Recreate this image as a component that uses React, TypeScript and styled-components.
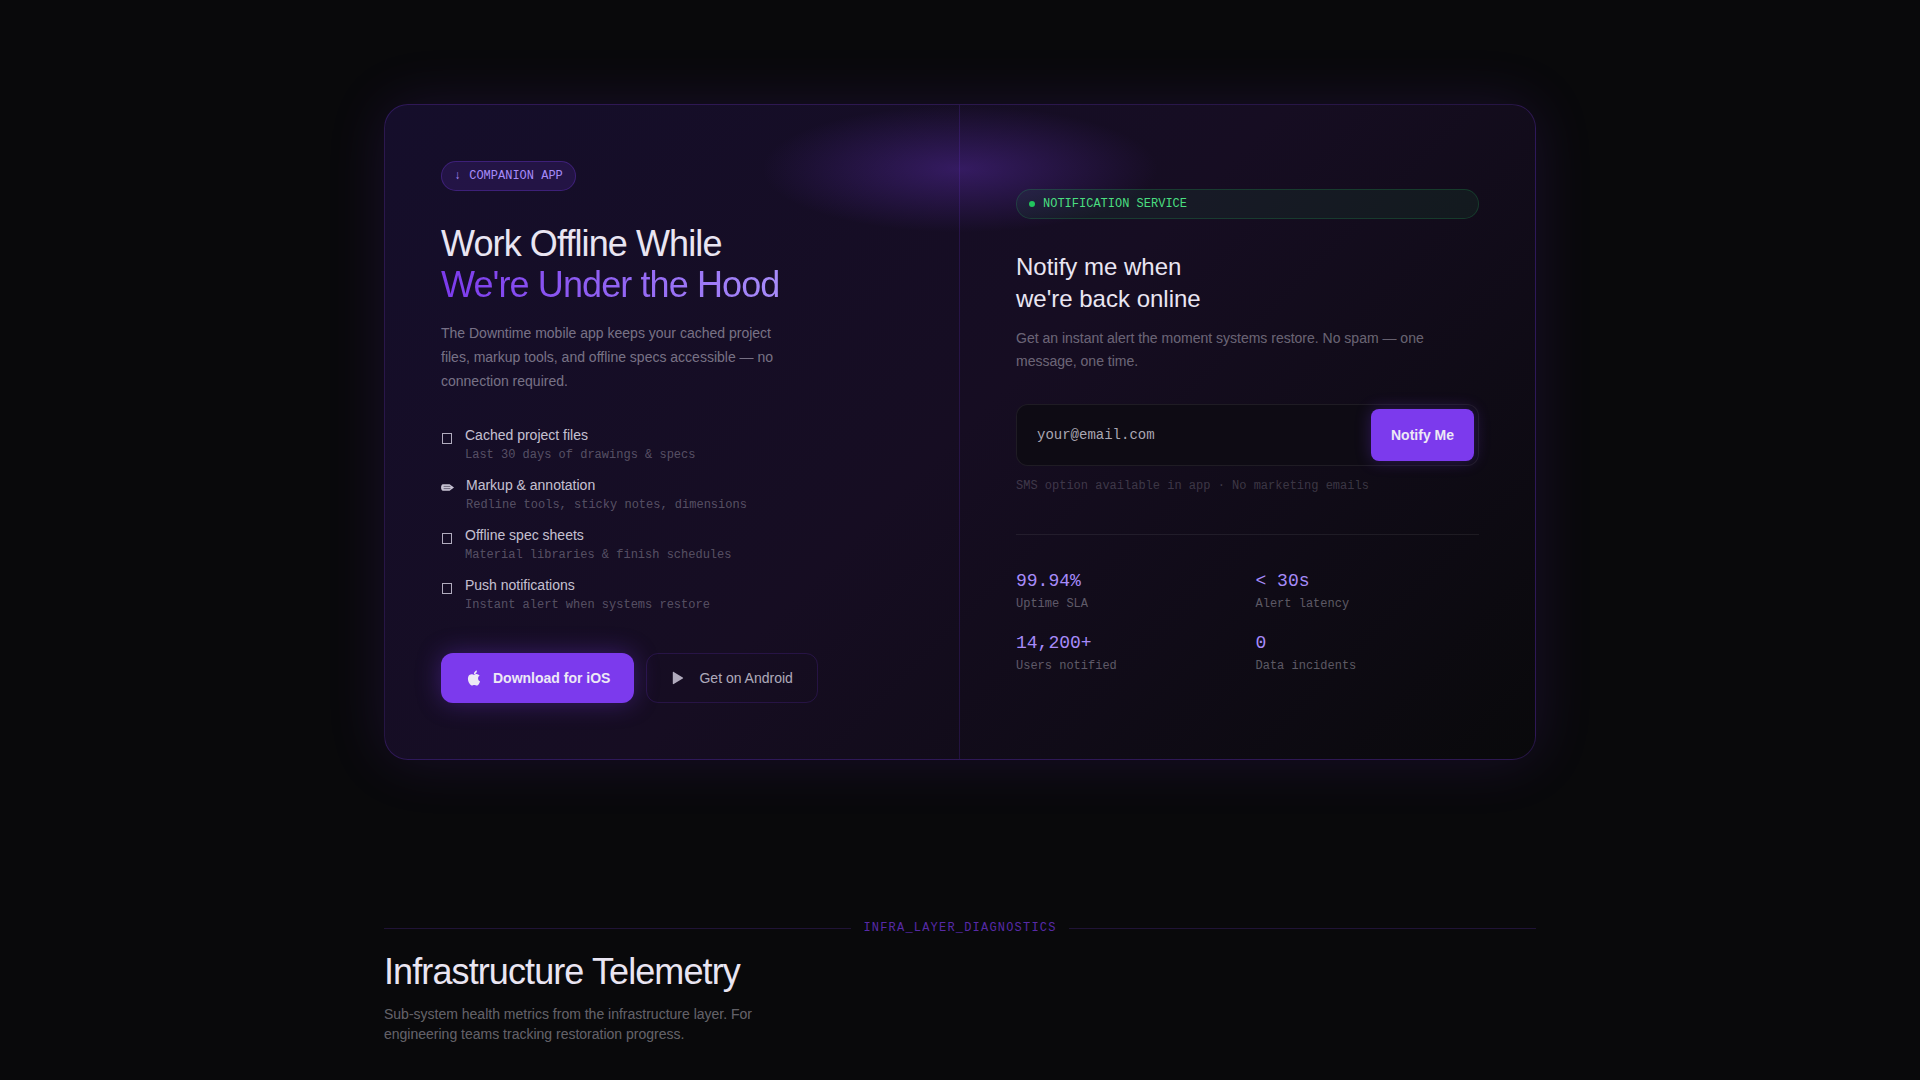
import React from "react";
import styled, { createGlobalStyle } from "styled-components";

const sans = `"Liberation Sans", Arial, sans-serif`;
const mono = `"Liberation Mono", "Courier New", monospace`;

const GlobalStyle = createGlobalStyle`
  *, *::before, *::after { box-sizing: border-box; }
  body {
    margin: 0;
    background: #09090b;
    color: #e9e5f2;
    font-family: ${sans};
    font-size: 14px;
    line-height: 20px;
  }
  h1, h2, h3, p, ul, dl, dd { margin: 0; padding: 0; font-weight: 400; }
  button, input { font: inherit; }
`;

const Page = styled.main`
  max-width: 1200px;
  margin: 0 auto;
  padding: 104px 24px 40px;
`;

const Card = styled.section`
  position: relative;
  display: grid;
  grid-template-columns: 1fr 1fr;
  overflow: hidden;
  border: 1px solid rgba(124, 58, 237, 0.25);
  border-radius: 24px;
  background: linear-gradient(135deg, #150e2b 0%, #160d22 50%, #09090b 100%);
  box-shadow: 0 0 60px rgba(124, 58, 237, 0.14);
`;

const Glow = styled.div`
  position: absolute;
  top: 0;
  left: 50%;
  width: 400px;
  height: 128px;
  transform: translateX(-50%);
  background: radial-gradient(ellipse, rgba(124, 58, 237, 0.3) 0%, transparent 70%);
  pointer-events: none;
`;

const AppPanel = styled.div`
  position: relative;
  padding: 56px;
  border-right: 1px solid rgba(124, 58, 237, 0.18);
`;

const NotifyPanel = styled.div`
  position: relative;
  display: flex;
  flex-direction: column;
  justify-content: center;
  padding: 56px;
`;

const Badge = styled.div<{ $tone: "violet" | "green" }>`
  display: ${(p) => (p.$tone === "violet" ? "inline-flex" : "flex")};
  align-items: center;
  gap: 8px;
  height: 30px;
  margin-bottom: 32px;
  padding: 0 12px;
  border: 1px solid
    ${(p) => (p.$tone === "violet" ? "rgba(124, 58, 237, 0.3)" : "rgba(34, 197, 94, 0.2)")};
  border-radius: 15px;
  background: ${(p) =>
    p.$tone === "violet" ? "rgba(124, 58, 237, 0.15)" : "rgba(34, 197, 94, 0.08)"};
  color: ${(p) => (p.$tone === "violet" ? "#a78bfa" : "#4ade80")};
  font-family: ${mono};
  font-size: 12px;
`;

const Dot = styled.span`
  width: 6px;
  height: 6px;
  border-radius: 50%;
  background: #22c55e;
`;

const Title = styled.h2`
  font-size: 36px;
  line-height: 41px;
  letter-spacing: -0.025em;
`;

const Accent = styled.span`
  background: linear-gradient(90deg, #7c3aed, #a78bfa);
  background-clip: text;
  -webkit-background-clip: text;
  color: transparent;
`;

const Lead = styled.p`
  max-width: 360px;
  margin-top: 16px;
  color: rgba(244, 240, 255, 0.45);
  line-height: 24px;
`;

const Features = styled.ul`
  display: flex;
  flex-direction: column;
  gap: 10px;
  margin-top: 32px;
  list-style: none;
`;

const Feature = styled.li`
  display: flex;
  align-items: flex-start;
  gap: 12px;
  color: rgba(244, 240, 255, 0.8);
`;

const Pencil = styled.svg`
  width: 13px;
  height: 7px;
  margin-top: 9px;
`;

const FeatureBox = styled.span`
  width: 10px;
  height: 11px;
  margin: 8px 1px 0;
  border: 1px solid rgba(244, 240, 255, 0.7);
`;

const FeatureNote = styled.div`
  color: rgba(244, 240, 255, 0.3);
  font-family: ${mono};
  font-size: 12px;
  line-height: 20px;
`;

const Actions = styled.div`
  display: flex;
  gap: 12px;
  margin-top: 38px;
`;

const StoreButton = styled.button<{ $primary?: boolean }>`
  display: inline-flex;
  align-items: center;
  gap: 10px;
  height: 50px;
  padding: 0 24px;
  border: ${(p) => (p.$primary ? "0" : "1px solid rgba(124, 58, 237, 0.18)")};
  border-radius: 12px;
  background: ${(p) => (p.$primary ? "#7c3aed" : "transparent")};
  box-shadow: ${(p) => (p.$primary ? "0 0 24px rgba(124, 58, 237, 0.35)" : "none")};
  color: ${(p) => (p.$primary ? "#ede9f5" : "rgba(244, 240, 255, 0.7)")};
  font-weight: ${(p) => (p.$primary ? 700 : 400)};
  cursor: pointer;
`;

const StoreIcon = styled.svg`
  width: 18px;
  height: 18px;
  fill: currentColor;
`;

const NotifyTitle = styled.h3`
  font-size: 24px;
  line-height: 32px;
`;

const NotifyText = styled.p`
  margin-top: 12px;
  color: rgba(244, 240, 255, 0.4);
  line-height: 23px;
`;

const NotifyForm = styled.form`
  display: flex;
  margin-top: 31px;
  padding: 4px;
  border: 1px solid rgba(255, 255, 255, 0.07);
  border-radius: 12px;
  background: #0e0b14;
`;

const EmailInput = styled.input`
  flex: 1;
  min-width: 0;
  height: 52px;
  padding: 0 16px;
  border: 0;
  outline: 0;
  background: transparent;
  color: #ede9f5;
  font-family: ${mono};
  &::placeholder { color: #a9a6b2; opacity: 1; }
`;

const SubmitButton = styled.button`
  height: 52px;
  padding: 0 20px;
  border: 0;
  border-radius: 8px;
  background: #7c3aed;
  box-shadow: 0 0 16px rgba(124, 58, 237, 0.3);
  color: #ede9f5;
  font-weight: 700;
  cursor: pointer;
`;

const FormNote = styled.p`
  margin-top: 10px;
  color: rgba(244, 240, 255, 0.2);
  font-family: ${mono};
  font-size: 12px;
`;

const Stats = styled.dl`
  display: grid;
  grid-template-columns: 1fr 1fr;
  gap: 16px;
  margin-top: 38px;
  padding-top: 32px;
  border-top: 1px solid rgba(255, 255, 255, 0.07);
  font-family: ${mono};
`;

const Stat = styled.div`
  display: flex;
  flex-direction: column-reverse;
`;

const StatLabel = styled.dt`
  color: rgba(244, 240, 255, 0.35);
  font-size: 12px;
  line-height: 18px;
`;

const StatValue = styled.dd`
  color: #a78bfa;
  font-size: 18px;
  line-height: 28px;
`;

const Telemetry = styled.section`
  margin-top: 158px;
`;

const SectionLabel = styled.div`
  display: flex;
  align-items: center;
  gap: 12px;
  margin-bottom: 13px;
  color: rgba(124, 58, 237, 0.7);
  font-family: ${mono};
  font-size: 12px;
  letter-spacing: 0.1em;
  &::before, &::after {
    content: "";
    flex: 1;
    height: 1px;
    background: rgba(124, 58, 237, 0.2);
  }
`;

const TelemetryText = styled.p`
  max-width: 400px;
  margin-top: 12px;
  color: rgba(244, 240, 255, 0.4);
`;

const features = [
  { icon: "box", title: "Cached project files", note: "Last 30 days of drawings & specs" },
  { icon: "pencil", title: "Markup & annotation", note: "Redline tools, sticky notes, dimensions" },
  { icon: "box", title: "Offline spec sheets", note: "Material libraries & finish schedules" },
  { icon: "box", title: "Push notifications", note: "Instant alert when systems restore" },
];

const stats = [
  { value: "99.94%", label: "Uptime SLA" },
  { value: "< 30s", label: "Alert latency" },
  { value: "14,200+", label: "Users notified" },
  { value: "0", label: "Data incidents" },
];

export default function App() {
  return (
    <>
      <GlobalStyle />
      <Page>
        <Card>
          <Glow />
          <AppPanel>
            <Badge $tone="violet">
              <span>↓</span>
              <span>COMPANION APP</span>
            </Badge>
            <Title>
              Work Offline While
              <br />
              <Accent>We're Under the Hood</Accent>
            </Title>
            <Lead>
              The Downtime mobile app keeps your cached project files, markup tools, and offline
              specs accessible — no connection required.
            </Lead>
            <Features>
              {features.map((f) => (
                <Feature key={f.title}>
                  {f.icon === "pencil" ? (
                    <Pencil viewBox="0 0 13 7" aria-hidden="true">
                      <path
                        d="M2 .2H8.6L13 3.5 8.6 6.8H2C.7 6.8.1 5.3.1 3.5S.7.2 2 .2z"
                        fill="currentColor"
                      />
                      <path
                        d="M2.6 2.4H9.4M2.6 4.6H9.4"
                        fill="none"
                        stroke="#150e26"
                        strokeWidth="0.5"
                      />
                    </Pencil>
                  ) : (
                    <FeatureBox />
                  )}
                  <div>
                    <div>{f.title}</div>
                    <FeatureNote>{f.note}</FeatureNote>
                  </div>
                </Feature>
              ))}
            </Features>
            <Actions>
              <StoreButton type="button" $primary>
                <StoreIcon viewBox="0 0 24 24" aria-hidden="true">
                  <path d="M18.71 19.5c-.83 1.24-1.71 2.45-3.05 2.47-1.34.03-1.77-.79-3.29-.79-1.53 0-2 .77-3.27.82-1.31.05-2.3-1.32-3.14-2.53C4.25 17 2.94 12.45 4.7 9.39c.87-1.52 2.43-2.48 4.12-2.51 1.28-.02 2.5.87 3.29.87.78 0 2.26-1.07 3.81-.91.65.03 2.47.26 3.64 1.98-.09.06-2.17 1.28-2.15 3.81.03 3.02 2.65 4.03 2.68 4.04-.03.07-.42 1.44-1.38 2.83M13 3.5c.73-.83 1.94-1.46 2.94-1.5.13 1.17-.34 2.35-1.04 3.19-.69.85-1.83 1.51-2.95 1.42-.15-1.15.41-2.35 1.05-3.11z" />
                </StoreIcon>
                Download for iOS
              </StoreButton>
              <StoreButton type="button">
                <StoreIcon viewBox="0 0 24 24" aria-hidden="true">
                  <path d="M2.4 4.6c0-.8.5-1.1 1.2-.7l12.1 7.3c.6.4.6 1.2 0 1.6L3.6 20.1c-.7.4-1.2.1-1.2-.7z" />
                </StoreIcon>
                Get on Android
              </StoreButton>
            </Actions>
          </AppPanel>
          <NotifyPanel>
            <Badge $tone="green">
              <Dot />
              <span>NOTIFICATION SERVICE</span>
            </Badge>
            <NotifyTitle>
              Notify me when
              <br />
              we're back online
            </NotifyTitle>
            <NotifyText>
              Get an instant alert the moment systems restore. No spam — one message, one time.
            </NotifyText>
            <NotifyForm onSubmit={(e) => e.preventDefault()}>
              <EmailInput type="email" aria-label="Email address" placeholder="your@email.com" />
              <SubmitButton type="submit">Notify Me</SubmitButton>
            </NotifyForm>
            <FormNote>SMS option available in app · No marketing emails</FormNote>
            <Stats>
              {stats.map((s) => (
                <Stat key={s.label}>
                  <StatLabel>{s.label}</StatLabel>
                  <StatValue>{s.value}</StatValue>
                </Stat>
              ))}
            </Stats>
          </NotifyPanel>
        </Card>
        <Telemetry>
          <SectionLabel>INFRA_LAYER_DIAGNOSTICS</SectionLabel>
          <Title>Infrastructure Telemetry</Title>
          <TelemetryText>
            Sub-system health metrics from the infrastructure layer. For engineering teams tracking
            restoration progress.
          </TelemetryText>
        </Telemetry>
      </Page>
    </>
  );
}
